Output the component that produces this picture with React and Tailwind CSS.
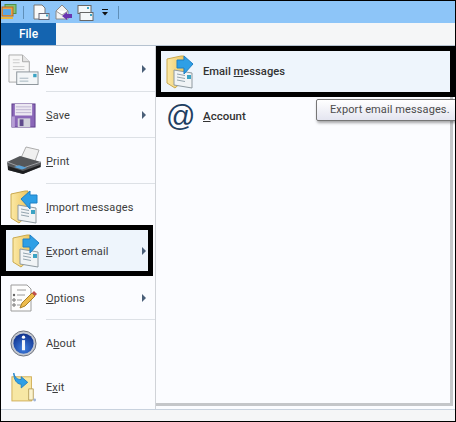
import React from 'react'

function DocIcon({ className }) {
  return (
    <svg viewBox="0 0 32 32" className={className}>
      <path d="M1 1h14l7 7v21H1z" fill="#f7f7f7" stroke="#a9a9a9" />
      <path d="M15 1v7h7" fill="#e4e4e4" stroke="#a9a9a9" />
      <path d="M5 6h7M5 9h7M5 13h12M5 16h12" stroke="#c9c9c9" />
      <rect x="9" y="18.5" width="22" height="13" fill="#f3f6f8" stroke="#8c949a" />
      <rect x="26" y="20.5" width="3.5" height="3.5" fill="#3aa3c4" />
      <path d="M12 25h9M12 28h9" stroke="#a4b4be" />
    </svg>
  )
}

function SaveIcon({ className }) {
  return (
    <svg viewBox="0 0 26 26" className={className}>
      <rect x="1" y="1" width="24" height="24" fill="#8a66b8" stroke="#5e3f8a" />
      <rect x="4" y="1" width="18" height="12" fill="#ece8f2" />
      <path d="M5 4h16M5 7h16M5 10h16" stroke="#bdb4d2" />
      <rect x="7" y="16" width="13" height="9" fill="#d2d2dc" />
      <rect x="9" y="17" width="4" height="7" fill="#5f4a8c" />
      <rect x="1" y="14" width="3" height="11" fill="#b59ed4" />
    </svg>
  )
}

function PrintIcon({ className }) {
  return (
    <svg viewBox="0 0 36 30" className={className}>
      <path d="M14 14 20 1l13 3-5 14z" fill="#f0f0f0" stroke="#adadad" />
      <path d="M1 16 14 10l21 6v5L17 28 2 24z" fill="#55575a" />
      <path d="M1 16l16 6 18-6" fill="none" stroke="#9a9ca0" />
      <path d="M2 20l15 5 17-6v2L17 28 2 24z" fill="#1d1e20" />
      <path d="M8 21l8 2.5 5-1.7-8-2.5z" fill="#5aa2d8" />
    </svg>
  )
}

// same folder for import/export, only the arrow flips
function FolderIcon({ className, back, id }) {
  return (
    <svg viewBox="0 0 28 34" className={className}>
      <defs>
        <linearGradient id={id} x1="0" y1="0" x2="1" y2="0">
          <stop offset="0%" stopColor="#fbe9a6" />
          <stop offset="100%" stopColor="#eec65f" />
        </linearGradient>
      </defs>
      <path d="M1 4 15 1h3v24L9 33 1 28z" fill={`url(#${id})`} stroke="#caa94e" />
      <path d="M8 15l18 3v15L8 30z" fill="#f1f4f6" stroke="#8f9aa0" />
      <path d="M11 19l8 1.5M11 22l8 1.5M11 25l8 1.5" stroke="#93a4ae" />
      <rect x="21" y="20" width="4" height="4" fill="#3aa3c4" />
      {back ? (
        <path d="M11 9 20 1v4h7v8h-7v6z" fill="#2e9fe6" stroke="#1f80c6" />
      ) : (
        <path d="M27 9 18 1v4h-7v8h7v6z" fill="#2e9fe6" stroke="#1f80c6" />
      )}
    </svg>
  )
}

function OptionsIcon({ className }) {
  return (
    <svg viewBox="0 0 28 28" className={className}>
      <path d="M1 1h16l4 4v22H1z" fill="#fdfdfd" stroke="#9c9c9c" />
      <path d="M7 6h9M7 11h8M7 16h5M7 21h5" stroke="#9a9a9a" />
      <circle cx="4" cy="11" r="1.2" fill="#666" />
      <circle cx="4" cy="16" r="1.2" fill="none" stroke="#666" />
      <circle cx="4" cy="21" r="1.2" fill="none" stroke="#666" />
      <path d="M10 24 12 19 22 9l3 3-10 10z" fill="#eebc4c" stroke="#a87f28" />
      <path d="M22 9l2-2 3 3-2 2z" fill="#c0504d" />
    </svg>
  )
}

function InfoIcon({ className }) {
  return (
    <svg viewBox="0 0 28 28" className={className}>
      <defs>
        <radialGradient id="infoBlue" cx="50%" cy="75%" r="75%">
          <stop offset="0%" stopColor="#3f7fe0" />
          <stop offset="100%" stopColor="#0e2f8a" />
        </radialGradient>
      </defs>
      <circle cx="14" cy="14" r="13" fill="#c4c8d0" stroke="#6a6e78" />
      <circle cx="14" cy="14" r="10.5" fill="url(#infoBlue)" />
      <circle cx="14" cy="7.5" r="1.7" fill="#fff" />
      <rect x="12.4" y="10.5" width="3.2" height="10.5" fill="#f4f6fb" />
    </svg>
  )
}

function ExitIcon({ className }) {
  return (
    <svg viewBox="0 0 28 32" className={className}>
      <rect x="1" y="5" width="21" height="26" fill="#f7e7a4" stroke="#d0ae55" />
      <path d="M19 18h5v12h-5z" fill="#fbf3cf" stroke="#b9a15c" />
      <path d="M3 1c1 5 4 7 8 7V5l7 6-7 6v-4C6 13 3 8 3 1z" fill="#2e9fe6" stroke="#1f7fc4" />
      <circle cx="25.5" cy="30" r="1.5" fill="#9fb4d8" />
    </svg>
  )
}

function Caret({ boxed }) {
  return <span className={`ml-auto h-0 w-0 border-y-[4px] border-l-[4px] border-y-transparent border-l-[#4a5f78] ${boxed ? 'mr-[2px]' : 'mr-[9px]'}`} />
}

function MenuRow({ icon, children, caret, line, height, boxed, extra = '' }) {
  return (
    <div className={`${height} ${extra} flex shrink-0 items-center ${boxed ? 'w-[152px] border-[5px] border-black bg-[#eef5fc]' : 'relative'}`}>
      <span className={`flex shrink-0 items-center justify-center ${boxed ? 'w-[40px]' : 'w-[45px]'}`}>{icon}</span>
      <span className="pt-px font-['Roboto',sans-serif] text-[11px] leading-none tracking-[0.1px] text-[#3c3c3c]">{children}</span>
      {caret && <Caret boxed={boxed} />}
      {line && <span className="absolute bottom-0 left-[45px] right-0 h-px bg-[#dde1e6]" />}
    </div>
  )
}

export default function App() {
  return (
    <div className="relative flex h-[422px] w-[456px] flex-col overflow-hidden border border-black bg-[#f5f6f7] font-['Roboto',sans-serif]">
      <div className="flex h-[22px] shrink-0 items-center bg-[#8dc5f8]">
        <svg viewBox="0 0 16 16" className="h-[16px] w-[16px] shrink-0">
          <rect x="4" y="0.5" width="11" height="9" fill="#7fc47a" stroke="#4f8f4a" />
          <rect x="1" y="3" width="11" height="9" fill="#e9a04a" stroke="#b96a1e" />
          <rect x="2" y="5" width="8" height="6" fill="#5aa8e8" />
          <path d="M0 14h12" stroke="#e8b840" strokeWidth="2" />
        </svg>
        <span className="ml-[6px] h-[13px] w-px bg-[#5f8fb8]" />
        <span className="ml-[9px] flex items-center gap-[5px]">
          <svg viewBox="0 0 17 17" className="h-[17px] w-[17px]">
            <path d="M1 1h8l3 3v11H1z" fill="#f9f9f9" stroke="#777" />
            <rect x="6" y="9.5" width="10" height="6" fill="#f4f7f9" stroke="#667" />
            <rect x="13" y="10.5" width="2" height="2" fill="#3aa3c4" />
          </svg>
          <svg viewBox="0 0 17 17" className="h-[17px] w-[17px]">
            <path d="M1 7 7 1l6 6v8H1z" fill="#f3f3f3" stroke="#888" />
            <path d="M1 7l6 4 6-4" fill="#fff" stroke="#999" />
            <path d="M7 12l5-4v2h5v4h-5v2z" fill="#6a35b0" />
          </svg>
          <svg viewBox="0 0 17 17" className="h-[17px] w-[17px]">
            <rect x="1" y="1.5" width="13" height="8" fill="#f4f7f9" stroke="#666" />
            <rect x="3" y="8.5" width="13" height="8" fill="#f4f7f9" stroke="#666" />
            <rect x="10" y="3" width="2" height="2" fill="#3aa3c4" />
            <rect x="13" y="10" width="2" height="2" fill="#3aa3c4" />
          </svg>
        </span>
        <svg viewBox="0 0 8 7" className="ml-[7px] h-[7px] w-[8px]">
          <path d="M1 .5h6" stroke="#111" />
          <path d="M1 3h6L4 6.5z" fill="#111" />
        </svg>
        <span className="ml-[9px] h-[13px] w-px bg-[#5f8fb8]" />
      </div>
      <div className="flex h-[23px] shrink-0 border-b border-[#b5c2d0] bg-[#f5f6f7]">
        <div className="flex w-[55px] items-center justify-center bg-[#1464b0] text-[12px] font-medium text-white">File</div>
      </div>
      <div className="flex h-[363px] shrink-0 bg-[#fbfcff]">
        <div className="flex w-[155px] shrink-0 flex-col border-r border-[#d0d3d8]">
          <MenuRow height="h-[46px]" caret line icon={<DocIcon className="h-[31px] w-[31px]" />}><u>N</u>ew</MenuRow>
          <MenuRow height="h-[46px]" caret line icon={<SaveIcon className="h-[25px] w-[25px]" />}><u>S</u>ave</MenuRow>
          <MenuRow height="h-[46px]" line icon={<PrintIcon className="h-[30px] w-[36px]" />}><u>P</u>rint</MenuRow>
          <MenuRow height="h-[41px]" extra="pt-[5px]" icon={<FolderIcon back id="fImport" className="h-[34px] w-[28px]" />}><u>I</u>mport messages</MenuRow>
          <MenuRow height="h-[51px]" boxed caret icon={<FolderIcon id="fExport" className="h-[34px] w-[28px]" />}><u>E</u>xport email</MenuRow>
          <MenuRow height="h-[44px]" caret line icon={<OptionsIcon className="h-[28px] w-[28px]" />}><u>O</u>ptions</MenuRow>
          <MenuRow height="h-[46px]" icon={<InfoIcon className="h-[27px] w-[27px]" />}>A<u>b</u>out</MenuRow>
          <MenuRow height="h-[41px]" icon={<ExitIcon className="h-[30px] w-[26px]" />}>E<u>x</u>it</MenuRow>
        </div>
        <div className="flex min-w-0 flex-1 flex-col">
          <div className="flex h-[51px] shrink-0 items-center gap-[9px] border-[5px] border-black bg-[#eef5fc] pl-[5px]">
            <FolderIcon id="fEmail" className="h-[34px] w-[28px]" />
            <span className="pt-px text-[11.2px] font-medium text-[#333]">Email <u>m</u>essages</span>
          </div>
          <div className="mb-[3px] mr-[2px] flex flex-1 border-b-[3px] border-r-[3px] border-[#c4c6c9]">
            <div className="flex h-[38px] items-center pl-[10px]">
              <span className="w-[37px] font-['Liberation_Sans',sans-serif] text-[29px] leading-none text-[#1f3f62]">@</span>
              <span className="pt-px text-[11.5px] font-medium text-[#333]"><u>A</u>ccount</span>
            </div>
          </div>
        </div>
      </div>
      <div className="flex-1 border-t border-[#c8d2de] bg-[#f5f6f7]" />
      <div className="absolute left-[315px] top-[98px] flex h-[22px] w-[141px] items-center rounded-[2px] border border-[#767676] bg-gradient-to-b from-white to-[#e4e5f0] pl-[13px] text-[11px] tracking-[0.1px] whitespace-nowrap text-[#4c4c4c] shadow-[1px_2px_3px_rgba(0,0,0,0.35)]">
        Export email messages.
      </div>
    </div>
  )
}
